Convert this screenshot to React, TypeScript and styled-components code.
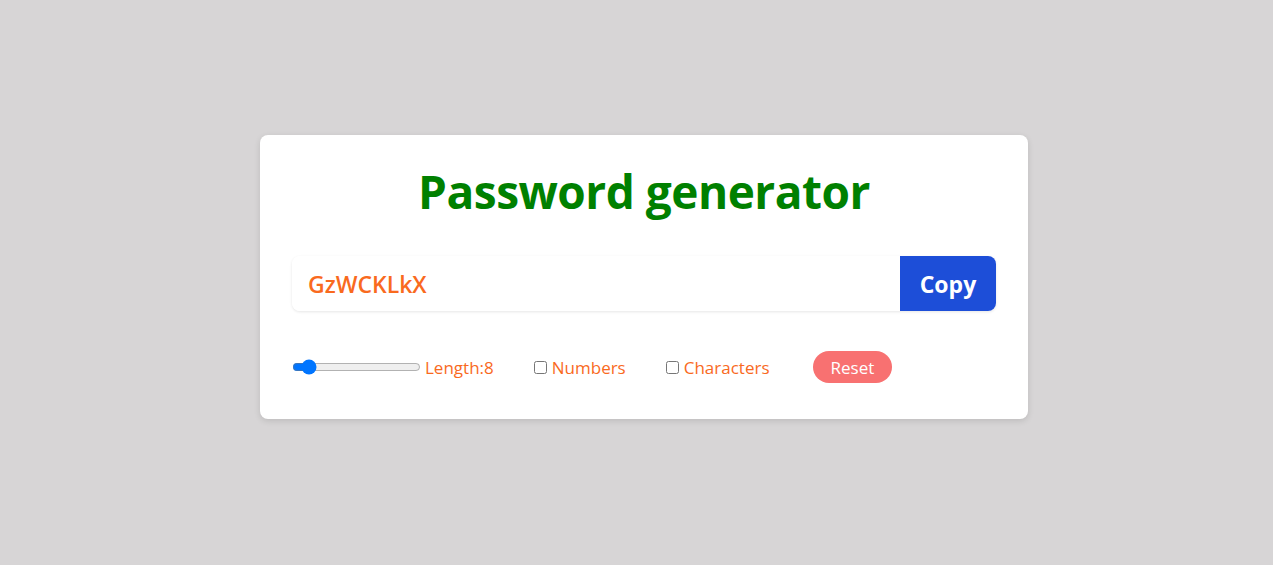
import React, { useState } from "react";
import styled, { createGlobalStyle } from "styled-components";

const GlobalStyle = createGlobalStyle`
  html, body {
    margin: 0;
    padding: 0;
    background-color: #d7d5d6;
    font-family: "Open Sans", "Noto Sans", sans-serif;
  }
`;

const Page = styled.main`
  min-height: 565px;
  box-sizing: border-box;
  padding: 0 0 11px 15px;
  display: flex;
  justify-content: center;
  align-items: center;
`;

const Card = styled.section`
  width: 768px;
  box-sizing: border-box;
  padding: 32px 32px 36px;
  background-color: #ffffff;
  border-radius: 8px;
  box-shadow: 0 2px 6px rgba(0, 0, 0, 0.12);
`;

const Title = styled.h1`
  margin: 0 0 41px;
  text-align: center;
  color: #008000;
  font-size: 46px;
  line-height: 48px;
  font-weight: 700;
  letter-spacing: -0.5px;
`;

const InputRow = styled.div`
  display: flex;
  height: 55px;
  border-radius: 8px;
  overflow: hidden;
  box-shadow: 0 1px 3px rgba(0, 0, 0, 0.1);
`;

const PasswordField = styled.input`
  flex: 1;
  min-width: 0;
  border: none;
  outline: none;
  padding: 0 16px;
  font-family: inherit;
  font-size: 23px;
  font-weight: 600;
  color: #f96a1e;
  background-color: #ffffff;
`;

const CopyButton = styled.button`
  width: 96px;
  border: none;
  background-color: #1d4ed8;
  color: #ffffff;
  font-family: inherit;
  font-size: 23px;
  font-weight: 700;
  cursor: pointer;
`;

const Controls = styled.div`
  display: flex;
  align-items: center;
  gap: 40px;
  margin-top: 40px;
  height: 32px;
`;

const Field = styled.label`
  display: flex;
  align-items: center;
  gap: 4px;
  color: #f96a1e;
  font-size: 17px;
`;

const Slider = styled.input`
  width: 129px;
  margin: 0;
  accent-color: #0075ff;
`;

const Check = styled.input`
  margin: 0 1px 0 0;
  width: 13px;
  height: 13px;
`;

const ResetButton = styled.button`
  margin-left: 3px;
  height: 32px;
  padding: 0 18px;
  border: none;
  border-radius: 999px;
  background-color: #f87171;
  color: #ffffff;
  font-family: inherit;
  font-size: 17px;
  cursor: pointer;
`;

export default function App() {
  const [length, setLength] = useState(8);
  const [numbers, setNumbers] = useState(false);
  const [chars, setChars] = useState(false);

  return (
    <>
      <GlobalStyle />
      <Page>
        <Card>
          <Title>Password generator</Title>
          <InputRow>
            <PasswordField readOnly value="GzWCKLkX" />
            <CopyButton>Copy</CopyButton>
          </InputRow>
          <Controls>
            <Field>
              <Slider
                type="range"
                min={0}
                max={100}
                value={length}
                onChange={(e) => setLength(Number(e.target.value))}
              />
              Length:{length}
            </Field>
            <Field>
              <Check
                type="checkbox"
                checked={numbers}
                onChange={() => setNumbers(!numbers)}
              />
              Numbers
            </Field>
            <Field>
              <Check
                type="checkbox"
                checked={chars}
                onChange={() => setChars(!chars)}
              />
              Characters
            </Field>
            <ResetButton>Reset</ResetButton>
          </Controls>
        </Card>
      </Page>
    </>
  );
}
